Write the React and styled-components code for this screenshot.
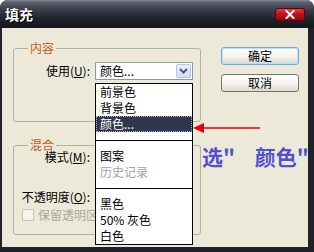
import React from "react";
import styled, { createGlobalStyle } from "styled-components";

const Global = createGlobalStyle`
  html, body { margin: 0; padding: 0; background: #ffffff; }
  body {
    font-family: "Noto Sans CJK SC", "Liberation Sans", sans-serif;
    font-size: 12px;
    color: #000;
  }
  #root { width: 314px; height: 252px; overflow: hidden; }
`;

const FONT = `"Noto Sans CJK SC", "Liberation Sans", sans-serif`;

const Window = styled.div`
  width: 314px;
  height: 252px;
  box-sizing: border-box;
  background: #202229;
  border-radius: 8px 8px 0 0;
  display: flex;
  flex-direction: column;
  overflow: hidden;
`;

const TitleBar = styled.div`
  height: 28px;
  flex: none;
  display: flex;
  align-items: center;
  justify-content: space-between;
  padding: 0 9px 0 5px;
  background: linear-gradient(
    #8e919c 0,
    #5f6270 2px,
    #3d404c 9px,
    #23252e 18px,
    #15161c 28px
  );
`;

const Title = styled.span`
  color: #fff;
  font-family: ${FONT};
  font-weight: 700;
  font-size: 14px;
  line-height: 16px;
  text-shadow: 1px 1px 0 #000;
`;

const CloseButton = styled.span`
  width: 30px;
  height: 13px;
  box-sizing: border-box;
  border: 1px solid #5a0508;
  border-radius: 3px;
  background: linear-gradient(#e2434a 0, #c4141c 40%, #9c0810 100%);
  display: flex;
  align-items: center;
  justify-content: center;
`;

const Body = styled.div`
  flex: 1;
  margin: 0 6px 5px 2px;
  background: #ece9d8;
  position: relative;
  display: flex;
  align-items: flex-start;
  padding: 14px 0 0 11px;
  gap: 20px;
`;

const LeftCol = styled.div`
  display: flex;
  flex-direction: column;
  width: 188px;
`;

const Group = styled.fieldset`
  margin: ${(p) => (p.$first ? "0" : "17px 0 0 0")};
  padding: 0;
  border: 1px solid #b2b0a2;
  border-radius: 3px;
  min-width: 0;
  width: 188px;
  box-sizing: border-box;
`;

const Legend = styled.legend`
  margin-left: 14px;
  padding: 0 2px;
  color: #c65a1e;
  font-family: ${FONT};
  font-size: 12px;
  line-height: 12px;
`;

const GroupContent = styled.div`
  box-sizing: border-box;
  height: ${(p) => p.$h}px;
  padding-top: ${(p) => p.$pt}px;
  display: flex;
  flex-direction: column;
`;

const Row = styled.div`
  display: flex;
  align-items: center;
  height: ${(p) => p.$h || 18}px;
  margin-top: ${(p) => p.$mt || 0}px;
`;

const FieldLabel = styled.span`
  width: 76px;
  flex: none;
  text-align: right;
  margin-right: 5px;
  white-space: nowrap;
  line-height: 12px;
  u { text-decoration: underline; text-underline-offset: 1px; }
`;

const Combo = styled.div`
  width: 98px;
  height: 18px;
  flex: none;
  box-sizing: border-box;
  border: 1px solid #7f9db9;
  background: #fff;
  display: flex;
  align-items: center;
  padding: 1px;
`;

const ComboText = styled.span`
  flex: 1;
  padding-left: 3px;
  line-height: 14px;
  white-space: nowrap;
`;

const ComboButton = styled.span`
  width: 15px;
  height: 14px;
  box-sizing: border-box;
  border: 1px solid #b6c4e6;
  border-radius: 2px;
  background: linear-gradient(#eef2fc, #d3ddf4);
  display: flex;
  align-items: center;
  justify-content: center;
`;

const CheckRow = styled.div`
  display: flex;
  align-items: center;
  height: 12px;
  margin-top: 6px;
  padding-left: 8px;
  gap: 4px;
  color: #aca899;
  white-space: nowrap;
  line-height: 12px;
`;

const CheckBox = styled.span`
  width: 12px;
  height: 12px;
  box-sizing: border-box;
  border: 1px solid #c9c7ba;
  background: #f4f3ee;
  flex: none;
`;

const CheckText = styled.span`
  width: 58px;
  overflow: hidden;
`;

const RightCol = styled.div`
  display: flex;
  flex-direction: column;
  gap: 9px;
  margin-top: 5px;
`;

const Button = styled.button`
  width: 78px;
  height: 18px;
  box-sizing: border-box;
  padding: 0;
  font-family: ${FONT};
  font-size: 12px;
  line-height: 14px;
  color: #000;
  border: 1px solid ${(p) => (p.$default ? "#69aee0" : "#76746c")};
  border-radius: 3px;
  background: linear-gradient(#ffffff, #f3f2ec 55%, #dcd9cc);
  box-shadow: ${(p) => (p.$default ? "inset 0 0 0 1px #b9def6" : "none")};
`;

const List = styled.ul`
  position: absolute;
  left: 93px;
  top: 55px;
  width: 98px;
  margin: 0;
  padding: 0;
  list-style: none;
  box-sizing: border-box;
  border: 1px solid #000;
  background: #fff;
`;

const Item = styled.li`
  height: 16px;
  line-height: 16px;
  padding-left: 4px;
  white-space: nowrap;
  color: ${(p) => (p.$selected ? "#fff" : p.$disabled ? "#a3a3a3" : "#000")};
  background: ${(p) => (p.$selected ? "#30364d" : "transparent")};
  outline: ${(p) => (p.$selected ? "1px dotted #aeb3c4" : "none")};
  outline-offset: -1px;
`;

const Separator = styled.li`
  height: 16px;
  display: flex;
  align-items: center;
  &::before {
    content: "";
    flex: 1;
    height: 1px;
    background: #000;
  }
`;

const Arrow = styled.svg`
  position: absolute;
  left: 190px;
  top: 94px;
`;

const Note = styled.div`
  position: absolute;
  left: 200px;
  top: 117px;
  color: #5050d2;
  font-family: ${FONT};
  font-weight: 700;
  font-size: 21px;
  line-height: 22px;
  white-space: nowrap;
  word-spacing: 15px;
`;

const items = [
  { t: "前景色" },
  { t: "背景色" },
  { t: "颜色...", selected: true },
  { sep: true },
  { t: "图案" },
  { t: "历史记录", disabled: true },
  { sep: true },
  { t: "黑色" },
  { t: "50% 灰色" },
  { t: "白色" },
];

export default function App() {
  return (
    <>
      <Global />
      <Window>
        <TitleBar>
          <Title>填充</Title>
          <CloseButton>
            <svg width="10" height="9" viewBox="0 0 10 9">
              <path d="M1.5 1 L8.5 8 M8.5 1 L1.5 8" stroke="#fff" strokeWidth="2" strokeLinecap="square" />
            </svg>
          </CloseButton>
        </TitleBar>
        <Body>
          <LeftCol>
            <Group $first>
              <Legend>内容</Legend>
              <GroupContent $h={67} $pt={8}>
                <Row>
                  <FieldLabel>
                    使用(<u>U</u>):
                  </FieldLabel>
                  <Combo>
                    <ComboText>颜色...</ComboText>
                    <ComboButton>
                      <svg width="9" height="6" viewBox="0 0 9 6">
                        <path d="M1 1 L4.5 4.5 L8 1" fill="none" stroke="#3f5a8e" strokeWidth="2" />
                      </svg>
                    </ComboButton>
                  </Combo>
                </Row>
              </GroupContent>
            </Group>
            <Group>
              <Legend>混合</Legend>
              <GroupContent $h={83} $pt={0}>
                <Row $h={12}>
                  <FieldLabel>
                    模式(<u>M</u>):
                  </FieldLabel>
                </Row>
                <Row $h={12} $mt={28}>
                  <FieldLabel>
                    不透明度(<u>O</u>):
                  </FieldLabel>
                </Row>
                <CheckRow>
                  <CheckBox />
                  <CheckText>保留透明区域</CheckText>
                </CheckRow>
              </GroupContent>
            </Group>
          </LeftCol>
          <RightCol>
            <Button $default>确定</Button>
            <Button>取消</Button>
          </RightCol>
          <List>
            {items.map((it, i) =>
              it.sep ? (
                <Separator key={i} />
              ) : (
                <Item key={i} $selected={it.selected} $disabled={it.disabled}>
                  {it.t}
                </Item>
              )
            )}
          </List>
          <Arrow width="72" height="12" viewBox="0 0 72 12">
            <path d="M1 6 L12 1 L12 11 Z" fill="#e6000c" />
            <path d="M11 6 L68 6" stroke="#e6000c" strokeWidth="1.6" />
          </Arrow>
          <Note>选" 颜色"</Note>
        </Body>
      </Window>
    </>
  );
}
